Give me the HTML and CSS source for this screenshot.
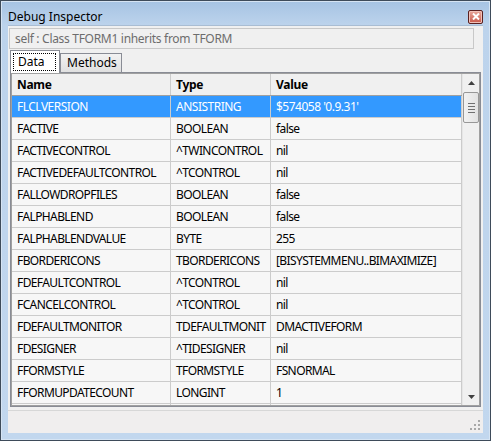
FILE: index.html
```html
<!DOCTYPE html>
<html>
<head>
<meta charset="utf-8">
<link rel="stylesheet" href="styles.css">
</head>
<body>
<div class="window">
  <div class="titlebar">
    <span class="title">Debug Inspector</span>
    <span class="close"><svg width="8" height="7" viewBox="0 0 8 7"><path d="M1 0.5 L7 6.5 M7 0.5 L1 6.5" stroke="#fff" stroke-width="2" fill="none"/></svg></span>
  </div>
  <div class="client">
    <div class="edit">self : Class TFORM1 inherits from TFORM</div>
    <div class="tabs">
      <div class="tab active"><span class="focus">Data</span></div>
      <div class="tab">Methods</div>
    </div>
    <div class="page">
      <div class="gridbox">
        <div class="grid">
          <div class="row head"><div class="c1">Name</div><div class="c2">Type</div><div class="c3">Value</div></div>
          <div class="row sel"><div class="c1">FLCLVERSION</div><div class="c2">ANSISTRING</div><div class="c3">$574058 '0.9.31'</div></div>
          <div class="row"><div class="c1">FACTIVE</div><div class="c2">BOOLEAN</div><div class="c3">false</div></div>
          <div class="row"><div class="c1">FACTIVECONTROL</div><div class="c2">^TWINCONTROL</div><div class="c3">nil</div></div>
          <div class="row"><div class="c1">FACTIVEDEFAULTCONTROL</div><div class="c2">^TCONTROL</div><div class="c3">nil</div></div>
          <div class="row"><div class="c1">FALLOWDROPFILES</div><div class="c2">BOOLEAN</div><div class="c3">false</div></div>
          <div class="row"><div class="c1">FALPHABLEND</div><div class="c2">BOOLEAN</div><div class="c3">false</div></div>
          <div class="row"><div class="c1">FALPHABLENDVALUE</div><div class="c2">BYTE</div><div class="c3">255</div></div>
          <div class="row"><div class="c1">FBORDERICONS</div><div class="c2">TBORDERICONS</div><div class="c3">[BISYSTEMMENU..BIMAXIMIZE]</div></div>
          <div class="row"><div class="c1">FDEFAULTCONTROL</div><div class="c2">^TCONTROL</div><div class="c3">nil</div></div>
          <div class="row"><div class="c1">FCANCELCONTROL</div><div class="c2">^TCONTROL</div><div class="c3">nil</div></div>
          <div class="row"><div class="c1">FDEFAULTMONITOR</div><div class="c2">TDEFAULTMONIT</div><div class="c3">DMACTIVEFORM</div></div>
          <div class="row"><div class="c1">FDESIGNER</div><div class="c2">^TIDESIGNER</div><div class="c3">nil</div></div>
          <div class="row"><div class="c1">FFORMSTYLE</div><div class="c2">TFORMSTYLE</div><div class="c3">FSNORMAL</div></div>
          <div class="row"><div class="c1">FFORMUPDATECOUNT</div><div class="c2">LONGINT</div><div class="c3">1</div></div>
          <div class="row"><div class="c1"></div><div class="c2"></div><div class="c3"></div></div>
        </div>
        <div class="vscroll">
          <div class="arrow up"><svg width="7" height="4" viewBox="0 0 7 4"><path d="M0 4 L3.5 0 L7 4 Z" fill="#404040"/></svg></div>
          <div class="thumb"><span></span><span></span><span></span><span></span></div>
          <div class="track"></div>
          <div class="arrow down"><svg width="7" height="4" viewBox="0 0 7 4"><path d="M0 0 L3.5 4 L7 0 Z" fill="#404040"/></svg></div>
        </div>
      </div>
    </div>
    <div class="status">
      <svg class="grip" width="11" height="11" viewBox="0 0 11 11">
        <g fill="#a8a8a8">
          <rect x="8" y="0" width="2" height="2"/>
          <rect x="4" y="4" width="2" height="2"/><rect x="8" y="4" width="2" height="2"/>
          <rect x="0" y="8" width="2" height="2"/><rect x="4" y="8" width="2" height="2"/><rect x="8" y="8" width="2" height="2"/>
        </g>
      </svg>
    </div>
  </div>
</div>
</body>
</html>
```
FILE: styles.css
```css
* { box-sizing: border-box; }
html, body { margin: 0; padding: 0; }
body {
  font-family: "Noto Sans", "Open Sans", "DejaVu Sans", sans-serif;
  font-size: 12px;
  color: #000;
  background: #fff;
}
.window {
  width: 491px;
  height: 441px;
  border: 1px solid #3e4b5a;
  background: linear-gradient(to bottom, #a6c3e3 0px, #bcd3ec 24px, #c2d7ee 100%);
  padding: 0 7px 7px 7px;
  display: flex;
  flex-direction: column;
  box-shadow: inset 0 0 0 1px #d6e4f3;
}
.titlebar {
  height: 24px;
  flex: none;
  display: flex;
  align-items: center;
  justify-content: space-between;
  padding-top: 7px;
}
.title {
  font-size: 12px;
  color: #000;
}
.close {
  width: 15px;
  height: 14px;
  border: 1px solid #5a2020;
  border-radius: 2px;
  background: linear-gradient(to bottom, #e9a89c, #c9584a);
  box-shadow: inset 0 0 0 1px #f0c0b8;
  display: flex;
  align-items: center;
  justify-content: center;
}
.client {
  flex: 1;
  min-height: 0;
  background: #f0f0f0;
  display: flex;
  flex-direction: column;
  padding: 2px 0 0 0;
  border-top: 1px solid #a9bdd3;
}
.edit {
  margin: 0 9px 0 1px;
  height: 21px;
  border: 1px solid #c8c8c8;
  background: #f0f0f0;
  color: #6d6d6d;
  padding: 2px 0 0 5px;
  line-height: 15px;
  letter-spacing: -0.3px;
  flex: none;
}
.tabs {
  display: flex;
  align-items: flex-end;
  height: 22px;
  margin: 1px 0 0 2px;
  position: relative;
  z-index: 1;
  flex: none;
}
.tab {
  height: 19px;
  border: 1px solid #898c95;
  border-bottom: none;
  background: linear-gradient(to bottom, #f2f2f2, #e0e0e0);
  padding: 0 4px 0 6px;
  line-height: 18px;
}
.tab.active {
  height: 23px;
  background: #fff;
  padding: 2px 3px 0 2px;
  margin-bottom: -1px;
  width: 50px;
}
.focus {
  display: block;
  border: 1px dotted #000;
  padding: 0 8px 0 4px;
  line-height: 16px;
  height: 18px;
}
.page {
  flex: 1;
  min-height: 0;
  margin: 0 2px;
  border: 1px solid #898c95;
  background: #fff;
  display: flex;
}
.gridbox {
  flex: 1;
  display: flex;
  border: 1px solid #a0a0a0;
  overflow: hidden;
  min-height: 0;
}
.grid {
  flex: 1;
  overflow: hidden;
  background: #f7f7f7;
}
.row {
  display: flex;
  height: 22px;
  border-bottom: 1px solid #cccccc;
  line-height: 21px;
  background: #f7f7f7;
  white-space: nowrap;
  letter-spacing: -0.6px;
}
.row > div {
  overflow: hidden;
  border-right: 1px solid #cccccc;
  padding-left: 5px;
}
.c1 { width: 159px; flex: none; }
.c2 { width: 100px; flex: none; }
.c3 { flex: 1; }
.row.head {
  font-weight: bold;
  letter-spacing: -0.3px;
  background: #f0f0f0;
  border-bottom: 1px solid #a0a0a0;
}
.row.sel {
  background: #3399ff;
  color: #fff;
  letter-spacing: -0.5px;
}
.vscroll {
  width: 17px;
  flex: none;
  display: flex;
  flex-direction: column;
  background: #f0f0f0;
  border-left: 1px solid #e6e6e6;
}
.arrow {
  height: 17px;
  display: flex;
  align-items: center;
  justify-content: center;
  flex: none;
}
.thumb {
  height: 31px;
  margin-top: 1px;
  border: 1px solid #979797;
  border-radius: 2px;
  background: linear-gradient(to right, #f2f2f2, #e2e2e2);
  display: flex;
  flex-direction: column;
  align-items: center;
  justify-content: center;
  gap: 2px;
  flex: none;
}
.thumb span {
  display: block;
  width: 7px;
  height: 1px;
  background: #707070;
}
.track { flex: 1; }
.status {
  height: 23px;
  flex: none;
  margin-top: 3px;
  border-top: 1px solid #d7d7d7;
  background: #f0eeee;
  display: flex;
  justify-content: flex-end;
  align-items: flex-end;
  padding: 0 2px 2px 0;
}
.grip { display: block; }
```
